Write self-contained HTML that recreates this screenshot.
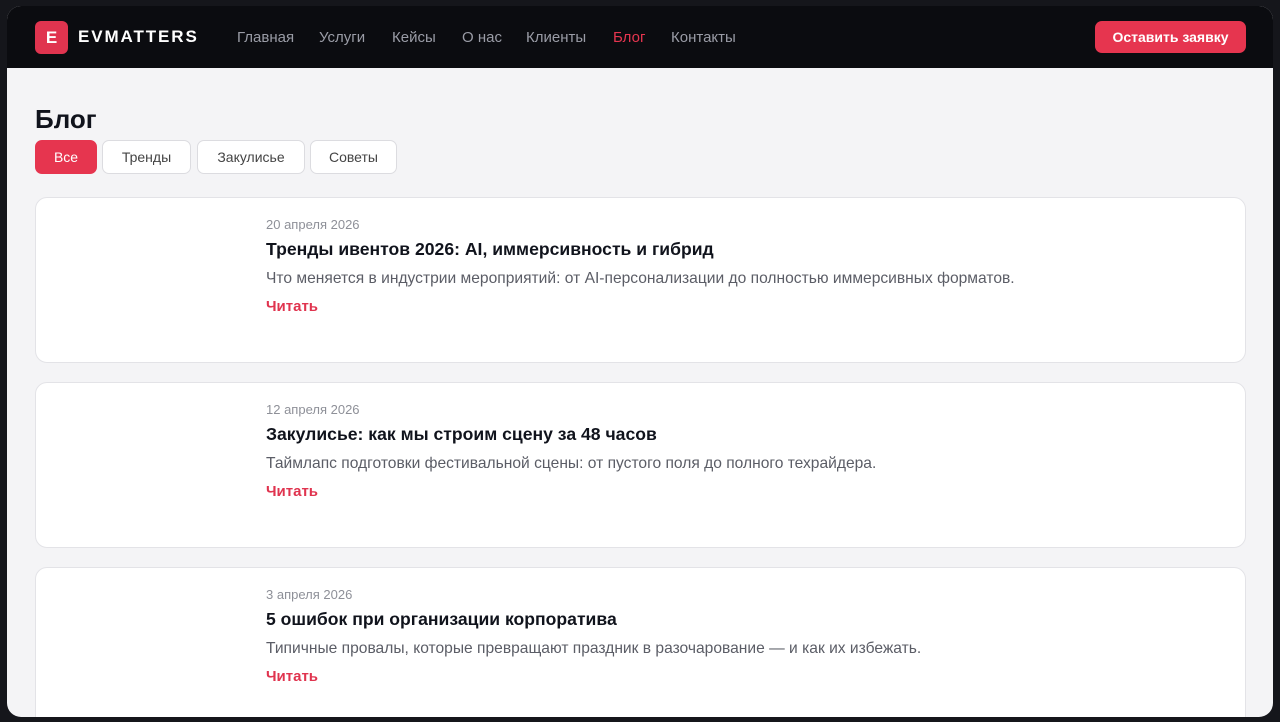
<!DOCTYPE html>
<html><head><meta charset="utf-8"><style>
*{box-sizing:border-box;margin:0;padding:0}
body{width:1280px;height:722px;background:#15161b;font-family:"Liberation Sans",sans-serif;overflow:hidden;position:relative}
.win{position:absolute;left:7px;top:6px;width:1266px;height:711px;border-radius:14px;overflow:hidden;background:#f4f4f6}
.hdr{height:62px;background:#0b0c10;position:relative}
.logo{position:absolute;left:28px;top:15px;width:33px;height:33px;border-radius:6px;background:#e0344f;color:#fff;font-weight:bold;font-size:17px;text-align:center;line-height:33px}
.brand{position:absolute;left:71px;top:21px;color:#fff;font-weight:bold;font-size:17px;letter-spacing:1.9px}
.nav{position:absolute;top:23px;font-size:15px;color:#9a9ca6}
.btn{position:absolute;left:1088px;top:15px;width:151px;height:32px;border-radius:7px;background:#e6354f;color:#fff;font-weight:bold;font-size:14px;text-align:center;line-height:32px}
h1{position:absolute;left:28px;top:98px;font-size:26px;color:#10131c;font-weight:bold}
.tab{position:absolute;top:134px;height:34px;border-radius:7px;border:1px solid #dcdce0;background:#fff;font-size:14px;color:#444;text-align:center;line-height:32px}
.card{position:absolute;left:28px;width:1211px;height:166px;background:#fff;border:1px solid #e3e3e7;border-radius:12px}
.d{position:absolute;left:230px;top:19px;font-size:13px;color:#8e9098}
.t{position:absolute;left:230px;top:41px;font-size:17.6px;font-weight:bold;color:#10131c}
.p{position:absolute;left:230px;top:72px;font-size:15.6px;color:#5b5d66}
.r{position:absolute;left:230px;top:100px;font-size:15px;font-weight:bold;color:#e0344f}
</style></head><body>
<div class="win">
<div class="hdr">
<div class="logo">E</div><div class="brand">EVMATTERS</div>
<div class="nav" style="left:230px">Главная</div>
<div class="nav" style="left:312px">Услуги</div>
<div class="nav" style="left:385px">Кейсы</div>
<div class="nav" style="left:455px">О нас</div>
<div class="nav" style="left:519px">Клиенты</div>
<div class="nav" style="left:606px;color:#e6354f">Блог</div>
<div class="nav" style="left:664px">Контакты</div>
<div class="btn">Оставить заявку</div>
</div>
<h1 style="top:98px">Блог</h1>
<div class="tab" style="left:28px;width:62px;background:#e6354f;border-color:#e6354f;color:#fff">Все</div>
<div class="tab" style="left:95px;width:89px">Тренды</div>
<div class="tab" style="left:190px;width:108px">Закулисье</div>
<div class="tab" style="left:303px;width:87px">Советы</div>
<div class="card" style="top:191px"><div class="d">20 апреля 2026</div><div class="t">Тренды ивентов 2026: AI, иммерсивность и гибрид</div><div class="p">Что меняется в индустрии мероприятий: от AI-персонализации до полностью иммерсивных форматов.</div><div class="r">Читать</div></div>
<div class="card" style="top:376px"><div class="d">12 апреля 2026</div><div class="t">Закулисье: как мы строим сцену за 48 часов</div><div class="p">Таймлапс подготовки фестивальной сцены: от пустого поля до полного техрайдера.</div><div class="r">Читать</div></div>
<div class="card" style="top:561px"><div class="d">3 апреля 2026</div><div class="t">5 ошибок при организации корпоратива</div><div class="p">Типичные провалы, которые превращают праздник в разочарование — и как их избежать.</div><div class="r">Читать</div></div>
</div>
</body></html>
